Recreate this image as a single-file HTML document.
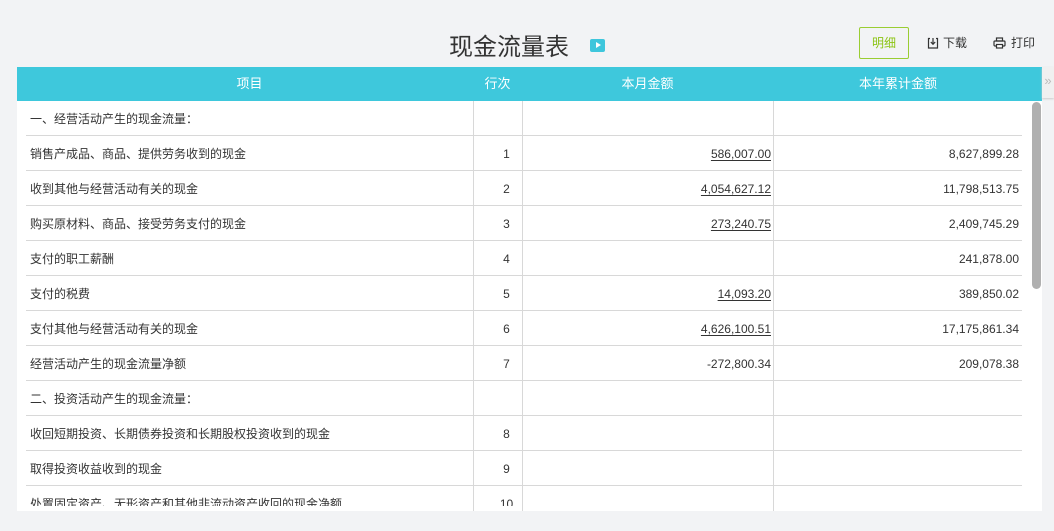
<!DOCTYPE html>
<html><head><meta charset="utf-8"><style>
*{margin:0;padding:0;box-sizing:border-box}
body{width:1054px;height:531px;background:#f2f3f5;font-family:"Liberation Sans","Noto Sans CJK SC",sans-serif;position:relative;overflow:hidden;color:#333}
.title{position:absolute;left:449px;top:27px;font-size:24px;color:#333}
.tv{position:absolute;left:590px;top:39px;width:15px;height:13px;background:#3ec6dc;border-radius:2px}
.tv:after{content:"";position:absolute;left:6px;top:3px;border-left:5px solid #fff;border-top:3.5px solid transparent;border-bottom:3.5px solid transparent}
.btn{position:absolute;left:859px;top:27px;width:50px;height:32px;border:1px solid #9acd32;border-radius:2px;color:#8cc414;font-size:12px;text-align:center;line-height:30px}
.act{position:absolute;top:35px;font-size:12px;color:#333;line-height:16px}
.act svg{position:absolute;top:2px}
.panel{position:absolute;left:17px;top:67px;width:1025px;height:444px;background:#fff}
.head{position:absolute;left:0;top:0;width:1025px;height:34px;background:#3ec8dc;color:#fff;font-size:13px}
.head div{position:absolute;top:0;line-height:34px;text-align:center}
.row{position:absolute;left:9px;width:996px;height:35px;border-bottom:1px solid #d8d8d8;font-size:12px}
.row span{position:absolute;top:0;line-height:36px;white-space:nowrap}
.c1{left:4px}.c2{left:456px;width:49px;text-align:center}.c3{right:251px;text-align:right}.c4{right:3px;text-align:right}
.c3 u{text-decoration:underline;text-underline-offset:2px}
.vl{position:absolute;top:34px;width:1px;height:410px;background:#d8d8d8}
.sb{position:absolute;left:1015px;top:35px;width:9px;height:187px;background:#b0b0b0;border-radius:5px}
.tab{position:absolute;left:1042px;top:67px;width:12px;height:31px;background:#f0f0f0;color:#bbb;font-size:13px;line-height:28px;text-align:center;box-shadow:0 1px 2px #ccc}
</style></head><body>
<div class="title">现金流量表</div><div class="tv"></div>
<div class="btn">明细</div>
<div class="act" style="left:927px;padding-left:16px"><svg width="12" height="12" viewBox="0 0 12 12" style="left:0"><path d="M3 1.5H1.5V11H10.5V1.5H9" fill="none" stroke="#333" stroke-width="1.2"/><path d="M6 1V7M3.8 5L6 7.3L8.2 5" fill="none" stroke="#333" stroke-width="1.2"/></svg>下载</div>
<div class="act" style="left:993px;padding-left:18px"><svg width="13" height="12" viewBox="0 0 13 12" style="left:0"><rect x="3.5" y="1" width="6" height="3" fill="none" stroke="#333" stroke-width="1.2"/><rect x="1" y="4" width="11" height="5" rx="1" fill="none" stroke="#333" stroke-width="1.2"/><rect x="3.5" y="7.5" width="6" height="3.5" fill="#fff" stroke="#333" stroke-width="1.2"/></svg>打印</div>
<div class="panel">
<div class="head"><div style="left:0;width:465px">项目</div><div style="left:456px;width:49px">行次</div><div style="left:505px;width:251px">本月金额</div><div style="left:756px;width:250px">本年累计金额</div></div>
<div class="vl" style="left:456px"></div><div class="vl" style="left:505px"></div><div class="vl" style="left:756px"></div>
<div class="row" style="top:34px"><span class="c1">一、经营活动产生的现金流量：</span></div>
<div class="row" style="top:69px"><span class="c1">销售产成品、商品、提供劳务收到的现金</span><span class="c2">1</span><span class="c3"><u>586,007.00</u></span><span class="c4">8,627,899.28</span></div>
<div class="row" style="top:104px"><span class="c1">收到其他与经营活动有关的现金</span><span class="c2">2</span><span class="c3"><u>4,054,627.12</u></span><span class="c4">11,798,513.75</span></div>
<div class="row" style="top:139px"><span class="c1">购买原材料、商品、接受劳务支付的现金</span><span class="c2">3</span><span class="c3"><u>273,240.75</u></span><span class="c4">2,409,745.29</span></div>
<div class="row" style="top:174px"><span class="c1">支付的职工薪酬</span><span class="c2">4</span><span class="c4">241,878.00</span></div>
<div class="row" style="top:209px"><span class="c1">支付的税费</span><span class="c2">5</span><span class="c3"><u>14,093.20</u></span><span class="c4">389,850.02</span></div>
<div class="row" style="top:244px"><span class="c1">支付其他与经营活动有关的现金</span><span class="c2">6</span><span class="c3"><u>4,626,100.51</u></span><span class="c4">17,175,861.34</span></div>
<div class="row" style="top:279px"><span class="c1">经营活动产生的现金流量净额</span><span class="c2">7</span><span class="c3">-272,800.34</span><span class="c4">209,078.38</span></div>
<div class="row" style="top:314px"><span class="c1">二、投资活动产生的现金流量：</span></div>
<div class="row" style="top:349px"><span class="c1">收回短期投资、长期债券投资和长期股权投资收到的现金</span><span class="c2">8</span></div>
<div class="row" style="top:384px"><span class="c1">取得投资收益收到的现金</span><span class="c2">9</span></div>
<div class="row" style="top:419px;height:20px;overflow:hidden;border:none"><span class="c1">处置固定资产、无形资产和其他非流动资产收回的现金净额</span><span class="c2">10</span></div>
<div class="sb"></div>
</div>
<div class="tab">»</div>
</body></html>
